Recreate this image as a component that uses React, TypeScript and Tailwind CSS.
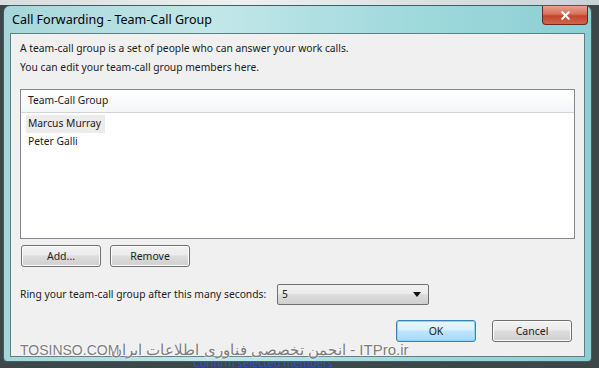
import { X } from "lucide-react";

const font = "font-['Noto_Sans','Liberation_Sans',sans-serif]";

function WinButton({ label, primary }: { label: string; primary?: boolean }) {
  return (
    <button
      className={`w-20 h-[22px] rounded-[3px] border text-[10.5px] text-[#1e1e1e] leading-none ${
        primary
          ? "border-[#3c7fb1] bg-[linear-gradient(#eaf6fd_0%,#d9f0fc_45%,#bee6fd_50%,#a7d9f5_100%)] shadow-[inset_0_0_0_1px_#8fd3f5]"
          : "border-[#707070] bg-[linear-gradient(#f2f2f2_0%,#ebebeb_45%,#dddddd_50%,#cfcfcf_100%)] shadow-[inset_0_0_0_1px_#fcfcfc]"
      }`}
    >
      {label}
    </button>
  );
}

export default function App() {
  return (
    <div className={`w-[599px] h-[368px] overflow-hidden bg-[#3d4649] ${font} relative`}>
      <div className="h-[5px] bg-[linear-gradient(90deg,#d8dcdc,#eef0f0_40%,#c9d2d3)]" />
      <div className="ml-[3px] w-[589px] h-[357px] rounded-t-[7px] rounded-b-[4px] border border-[#3f5f63] bg-[linear-gradient(90deg,#a6d6d9_0%,#c3e7e9_35%,#9fd9dc_70%,#8ccfd4_100%)] flex flex-col">
        <div className="h-[27px] flex items-start justify-between">
          <span className="pl-[8px] pt-[5px] text-[12.5px] text-black">Call Forwarding - Team-Call Group</span>
          <div className="mr-[3px] w-[46px] h-[19px] rounded-b-[4px] border border-[#6b2a20] border-t-0 bg-[linear-gradient(#e8a190_0%,#d8705c_45%,#c2442c_55%,#d1674e_100%)] flex items-center justify-center">
            <X className="w-[13px] h-[13px] text-white" strokeWidth={4} />
          </div>
        </div>
        <div className="mx-[6px] mb-[4px] flex-1 border border-[#5f7f84] bg-[#f0f0f0] px-[9px] pt-[5px] text-[10.3px] text-[#1b1b1b] whitespace-nowrap">
          <p className="leading-[19px]">A team-call group is a set of people who can answer your work calls.</p>
          <p className="leading-[19px]">You can edit your team-call group members here.</p>
          <div className="mt-[12px] h-[150px] border border-[#828790] bg-white">
            <div className="h-[23px] flex items-center px-[7px] border-b border-[#d5d5d5] bg-[linear-gradient(#ffffff,#f4f5f6)]">
              Team-Call Group
            </div>
            <div className="pt-[2px] pl-[5px]">
              <div className="w-[79px] h-[18px] bg-[#ececec] pl-[2px] flex items-center">Marcus Murray</div>
              <div className="h-[18px] pl-[2px] flex items-center">Peter Galli</div>
            </div>
          </div>
          <div className="mt-[6px] flex gap-[9px] pl-px">
            <WinButton label="Add..." />
            <WinButton label="Remove" />
          </div>
          <div className="mt-[17px] flex items-center">
            <span className="w-[257px]">Ring your team-call group after this many seconds:</span>
            <div className="w-[152px] h-[21px] rounded-[2px] border border-[#707070] bg-[linear-gradient(#f2f2f2_0%,#ebebeb_45%,#dddddd_50%,#cfcfcf_100%)] flex items-center justify-between px-[4px]">
              <span>5</span>
              <svg width="8" height="5" viewBox="0 0 8 5" className="mr-[3px]">
                <path d="M0 0H8L4 5Z" fill="#111" />
              </svg>
            </div>
          </div>
          <div className="mt-[15px] flex justify-end gap-[16px] pr-[3px]">
            <WinButton label="OK" primary />
            <WinButton label="Cancel" />
          </div>
        </div>
      </div>
      <div className="h-[6px] flex items-start pl-[193px] overflow-hidden">
        <span className="text-[11px] leading-[10px] -mt-[4px] text-[#2a57c4] underline">Confirm selected members</span>
      </div>
      <div className="absolute left-[20px] top-[339px] flex items-center text-[#7b7b7b] [text-shadow:0_0_2px_#fff,0_0_2px_#fff] font-['Liberation_Sans',sans-serif]">
        <span className="text-[14px]">TOSINSO.COM</span>
        <span dir="ltr" className="text-[15px] -ml-[8px]">انجمن تخصصی فناوری اطلاعات ایران - ITPro.ir</span>
      </div>
    </div>
  );
}
